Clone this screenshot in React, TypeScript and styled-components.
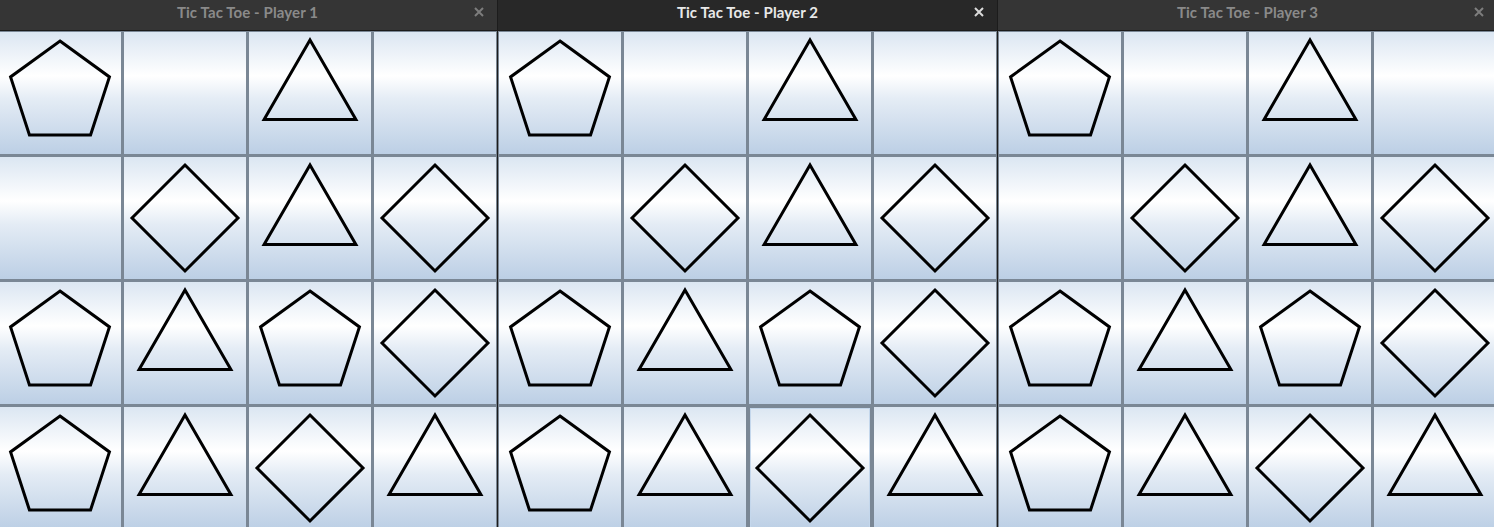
import React from 'react';
import styled, { createGlobalStyle, css } from 'styled-components';

type Mark = 'p' | 't' | 'd' | '';

const BOARD: Mark[][] = [
  ['p', '', 't', ''],
  ['', 'd', 't', 'd'],
  ['p', 't', 'p', 'd'],
  ['p', 't', 'd', 't'],
];

const SHAPES: Record<Exclude<Mark, ''>, string> = {
  p: '0,-52 49.45,-16.07 30.56,42.07 -30.56,42.07 -49.45,-16.07',
  t: '0,-53 45.9,26.5 -45.9,26.5',
  d: '0,-53 53,0 0,53 -53,0',
};

const GlobalStyle = createGlobalStyle`
  html, body {
    margin: 0;
    padding: 0;
    background: #2a2a2a;
    overflow: hidden;
  }
`;

const Desktop = styled.div`
  display: flex;
  align-items: flex-start;
  margin-left: -2px;
  width: 1500px;
  height: 527px;
  overflow: hidden;
`;

const Window = styled.section`
  width: 500px;
  flex: none;
  display: flex;
  flex-direction: column;
  border-right: 1px solid #1c1c1c;
  box-sizing: border-box;
`;

const TitleBar = styled.header<{ $active?: boolean }>`
  position: relative;
  flex: none;
  height: 31px;
  box-sizing: border-box;
  border-bottom: 1px solid #1b1b1b;
  background: ${(p) => (p.$active ? '#282828' : '#353535')};
  color: ${(p) => (p.$active ? '#e8e8e8' : '#8a8a8a')};
  display: flex;
  justify-content: center;
  align-items: flex-start;
  padding-top: 3px;
  font-family: Lato, 'Noto Sans', sans-serif;
  font-weight: 700;
  font-size: 15px;
  line-height: 19px;
`;

const Title = styled.span`
  letter-spacing: 0.1px;
`;

const CloseButton = styled.button<{ $active?: boolean }>`
  position: absolute;
  right: 13px;
  top: 7px;
  width: 10px;
  height: 10px;
  padding: 0;
  border: none;
  background: transparent;
  color: ${(p) => (p.$active ? '#dcdcdc' : '#7d7d7d')};
  display: flex;
`;

const Board = styled.div`
  flex: none;
  display: grid;
  grid-template-columns: repeat(4, 124px);
  grid-auto-rows: 124px;
  gap: 1px;
  background: #7a8795;
`;

const Cell = styled.div<{ $focused?: boolean }>`
  border: 1px solid #7a8795;
  background: linear-gradient(
    to bottom,
    #dbe6f2 0%,
    #ffffff 36%,
    #e4ecf5 55%,
    #bccfe5 100%
  );
  display: flex;
  align-items: center;
  justify-content: center;
  ${(p) =>
    p.$focused &&
    css`
      box-shadow: inset 0 0 0 1px #7a8795, inset 0 0 0 2px #c4d7ec;
    `}
`;

const Shape: React.FC<{ mark: Mark }> = ({ mark }) => {
  if (!mark) return null;
  return (
    <svg width="112" height="112" viewBox="-56 -56 112 112">
      <polygon
        points={SHAPES[mark]}
        fill="none"
        stroke="#000"
        strokeWidth={3}
        strokeLinejoin="miter"
      />
    </svg>
  );
};

const CloseIcon = () => (
  <svg width="10" height="10" viewBox="0 0 10 10">
    <path d="M1 1 L9 9 M9 1 L1 9" stroke="currentColor" strokeWidth={2} />
  </svg>
);

const GameWindow: React.FC<{ player: number; active?: boolean; focus?: [number, number] }> = ({
  player,
  active,
  focus,
}) => (
  <Window>
    <TitleBar $active={active}>
      <Title>Tic Tac Toe - Player {player}</Title>
      <CloseButton $active={active} aria-label="Close">
        <CloseIcon />
      </CloseButton>
    </TitleBar>
    <Board>
      {BOARD.map((row, r) =>
        row.map((mark, c) => (
          <Cell key={`${r}-${c}`} $focused={!!focus && focus[0] === r && focus[1] === c}>
            <Shape mark={mark} />
          </Cell>
        ))
      )}
    </Board>
  </Window>
);

export default function App() {
  return (
    <>
      <GlobalStyle />
      <Desktop>
        <GameWindow player={1} />
        <GameWindow player={2} active focus={[3, 2]} />
        <GameWindow player={3} />
      </Desktop>
    </>
  );
}
